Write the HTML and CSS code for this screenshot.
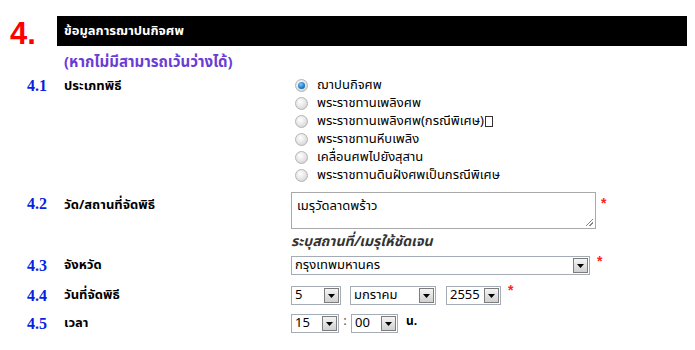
FILE: index.html
```html
<!DOCTYPE html>
<html lang="th">
<head>
    <meta charset="UTF-8">
    <meta name="viewport" content="width=device-width, initial-scale=1.0">
    <title>ข้อมูลการฌาปนกิจศพ</title>
  <link rel="stylesheet" href="styles.css">
</head>
<body>
    <div class="section">
        <div class="section-head">
            <div class="section-no">4.</div>
            <div class="section-bar">ข้อมูลการฌาปนกิจศพ</div>
        </div>
        <p class="note">(หากไม่มีสามารถเว้นว่างได้)</p>

        <div class="form">
            <div class="row row-type">
                <div class="num">4.1</div>
                <div class="label">ประเภทพิธี</div>
                <div class="field radios">
                    <label class="radio-item"><span class="radio checked"></span>ฌาปนกิจศพ</label>
                    <label class="radio-item"><span class="radio"></span>พระราชทานเพลิงศพ</label>
                    <label class="radio-item"><span class="radio"></span>พระราชทานเพลิงศพ(กรณีพิเศษ)<span class="box-glyph"></span></label>
                    <label class="radio-item"><span class="radio"></span>พระราชทานหีบเพลิง</label>
                    <label class="radio-item"><span class="radio"></span>เคลื่อนศพไปยังสุสาน</label>
                    <label class="radio-item"><span class="radio"></span>พระราชทานดินฝังศพเป็นกรณีพิเศษ</label>
                </div>
            </div>

            <div class="row row-place">
                <div class="num">4.2</div>
                <div class="label">วัด/สถานที่จัดพิธี</div>
                <div class="field">
                    <div class="inline">
                        <div class="textarea">เมรุวัดลาดพร้าว<span class="grip"></span></div>
                        <span class="req">*</span>
                    </div>
                    <div class="hint">ระบุสถานที่/เมรุให้ชัดเจน</div>
                </div>
            </div>

            <div class="row row-province">
                <div class="num">4.3</div>
                <div class="label">จังหวัด</div>
                <div class="field inline">
                    <div class="select select-wide"><span class="val">กรุงเทพมหานคร</span><span class="arrow"><svg width="7" height="4" viewBox="0 0 7 4"><path d="M0 0h7L3.5 4z" fill="#000"/></svg></span></div>
                    <span class="req">*</span>
                </div>
            </div>

            <div class="row row-date">
                <div class="num">4.4</div>
                <div class="label">วันที่จัดพิธี</div>
                <div class="field inline">
                    <div class="select select-day"><span class="val">5</span><span class="arrow"><svg width="7" height="4" viewBox="0 0 7 4"><path d="M0 0h7L3.5 4z" fill="#000"/></svg></span></div>
                    <div class="select select-month"><span class="val">มกราคม</span><span class="arrow"><svg width="7" height="4" viewBox="0 0 7 4"><path d="M0 0h7L3.5 4z" fill="#000"/></svg></span></div>
                    <div class="select select-year"><span class="val">2555</span><span class="arrow"><svg width="7" height="4" viewBox="0 0 7 4"><path d="M0 0h7L3.5 4z" fill="#000"/></svg></span></div>
                    <span class="req">*</span>
                </div>
            </div>

            <div class="row row-time">
                <div class="num">4.5</div>
                <div class="label">เวลา</div>
                <div class="field inline">
                    <div class="select select-hour"><span class="val">15</span><span class="arrow"><svg width="7" height="4" viewBox="0 0 7 4"><path d="M0 0h7L3.5 4z" fill="#000"/></svg></span></div>
                    <span class="colon">:</span>
                    <div class="select select-min"><span class="val">00</span><span class="arrow"><svg width="7" height="4" viewBox="0 0 7 4"><path d="M0 0h7L3.5 4z" fill="#000"/></svg></span></div>
                    <span class="unit">น.</span>
                </div>
            </div>
        </div>
    </div>
</body>
</html>
```

FILE: styles.css
```css
:root {
  --thai: Tahoma, "Noto Sans Thai", "Noto Sans", "DejaVu Sans", sans-serif;
  --num-blue: #0a1fe0;
  --note: #6a3cd6;
  --border: #a5acb5;
}
body {
  margin: 0;
  background-color: #ffffff;
  font-family: var(--thai);
  font-size: 13px;
  color: #000;
}
.section {
  width: 695px;
}
.section-head {
  display: flex;
  align-items: stretch;
  margin-top: 16px;
  height: 30px;
}
.section-no {
  width: 47px;
  padding-left: 10px;
  font-family: "Liberation Sans", Arial, sans-serif;
  font-weight: bold;
  font-size: 31px;
  line-height: 35px;
  color: #ff0000;
}
.section-bar {
  width: 623px;
  background-color: #000;
  color: #fff;
  font-weight: bold;
  font-size: 13px;
  line-height: 30px;
  padding-left: 7px;
}
.note {
  margin: 6px 0 0 64px;
  font-weight: bold;
  font-size: 15px;
  line-height: 22px;
  color: var(--note);
}

/* form rows */
.form {
  display: flex;
  flex-direction: column;
}
.row {
  display: grid;
  grid-template-columns: 37px 227px 1fr;
  padding-left: 27px;
}
.num {
  font-family: "Liberation Serif", "Times New Roman", serif;
  font-weight: bold;
  font-size: 16px;
  color: var(--num-blue);
}
.label {
  font-weight: bold;
  font-size: 13px;
}
.row-type {
  margin-top: 2px;
  line-height: 18px;
}
.row-type .num,
.row-type .label {
  padding-top: 1px;
}
.radios {
  display: flex;
  flex-direction: column;
}
.radio-item {
  display: flex;
  align-items: center;
  height: 18px;
  padding-left: 4px;
}
.radio {
  width: 11px;
  height: 11px;
  border-radius: 50%;
  border: 1px solid #b4b4b4;
  background: radial-gradient(circle at 40% 35%, #ffffff 0%, #e4e4e4 55%, #c8c8c8 100%);
  margin-right: 9px;
  position: relative;
}
.radio.checked::after {
  content: "";
  position: absolute;
  left: 2px;
  top: 2px;
  width: 7px;
  height: 7px;
  border-radius: 50%;
  background: radial-gradient(circle at 40% 35%, #7fc6ff 0%, #1a78c8 60%, #0b4f8c 100%);
}
.box-glyph {
  display: inline-block;
  width: 6px;
  height: 9px;
  border: 1px solid #333;
  margin-left: 1px;
}

.inline {
  display: flex;
  align-items: flex-start;
}
.row-place {
  margin-top: 8px;
}
.row-place .num,
.row-place .label {
  padding-top: 3px;
}
.textarea {
  position: relative;
  box-sizing: border-box;
  width: 305px;
  height: 37px;
  border: 1px solid #a9a9a9;
  padding: 3px 5px;
  font-size: 13px;
}
.grip {
  position: absolute;
  right: 2px;
  bottom: 2px;
  width: 7px;
  height: 7px;
  background: linear-gradient(135deg, transparent 45%, #888 45%, #888 55%, transparent 55%, transparent 70%, #888 70%, #888 80%, transparent 80%);
}
.req {
  color: #ff2020;
  font-family: "Liberation Sans", Arial, sans-serif;
  font-weight: bold;
  font-size: 14px;
  line-height: 14px;
  margin-left: 5px;
  margin-top: 4px;
}
.hint {
  margin-top: 3px;
  font-style: italic;
  font-weight: bold;
  font-size: 14px;
  color: #333;
  line-height: 20px;
}

.select {
  box-sizing: border-box;
  display: flex;
  align-items: center;
  height: 19px;
  border: 1px solid var(--border);
  background: #fff;
  padding-left: 3px;
}
.select .val {
  flex: 1;
  font-size: 13px;
  line-height: 17px;
  white-space: nowrap;
}
.arrow {
  box-sizing: border-box;
  width: 15px;
  height: 15px;
  margin-right: 1px;
  display: flex;
  align-items: center;
  justify-content: center;
  border: 1px solid #7d7d7d;
  background: linear-gradient(#f4f4f4, #d0d0d0);
}
.select-wide { width: 299px; }
.select-day { width: 50px; }
.select-month { width: 86px; margin-left: 9px; }
.select-year { width: 55px; margin-left: 10px; }
.select-hour { width: 48px; }
.select-min { width: 47px; }
.row-date .req {
  margin-top: -3px;
  margin-left: 7px;
}
.row-province .req {
  margin-top: -2px;
  margin-left: 7px;
}

.row-province {
  margin-top: 4px;
}
.row-date {
  margin-top: 11px;
}
.row-time {
  margin-top: 9px;
}
.row-province .num,
.row-province .label,
.row-date .num,
.row-date .label,
.row-time .num,
.row-time .label {
  line-height: 19px;
}
.colon {
  width: 12px;
  text-align: center;
  color: #555;
  line-height: 14px;
}
.unit {
  margin-left: 8px;
  font-weight: bold;
  font-size: 12px;
  line-height: 14px;
}
```
